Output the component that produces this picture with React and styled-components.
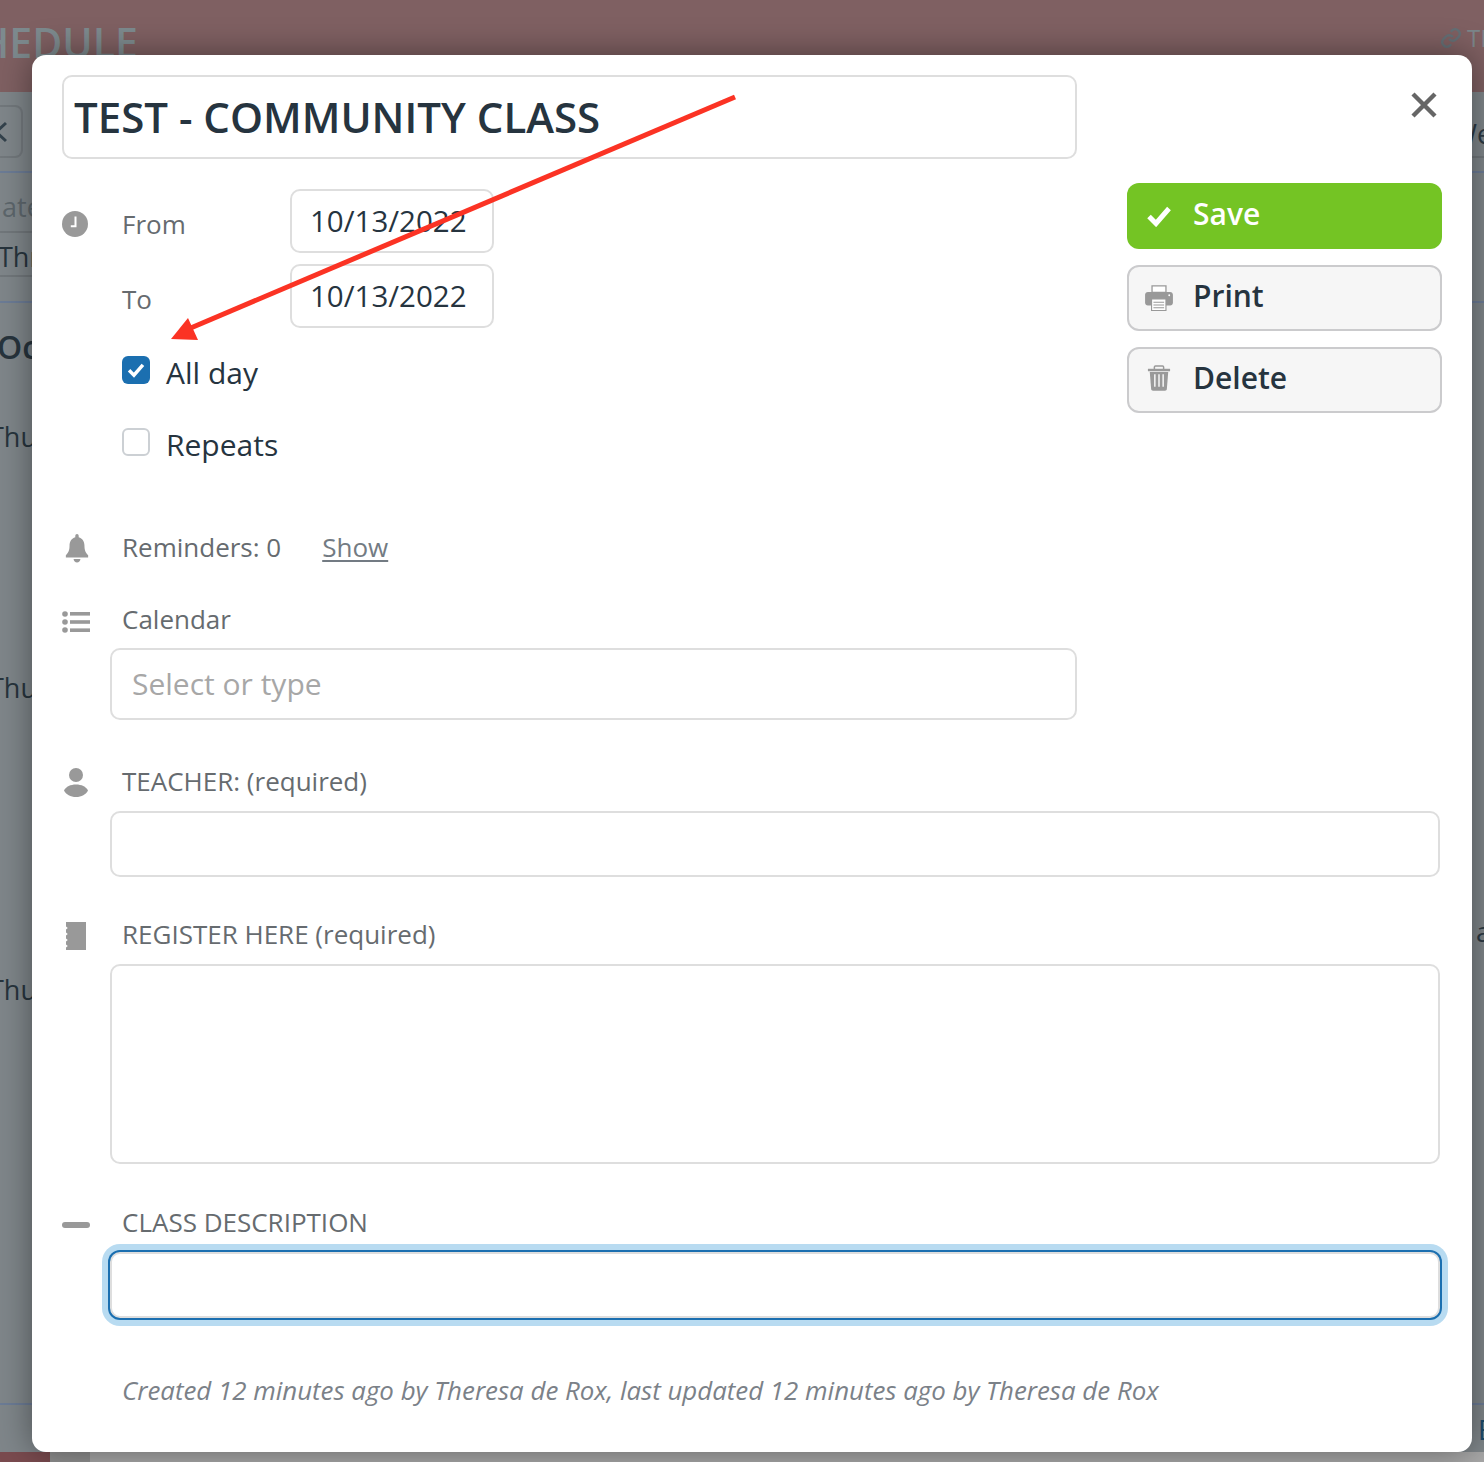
import React from "react";
import styled, { createGlobalStyle } from "styled-components";

const Global = createGlobalStyle`
  html, body { margin: 0; padding: 0; background: #7f8589; }
  * { box-sizing: border-box; }
  body { font-family: "Open Sans", "Liberation Sans", sans-serif; }
`;

const Page = styled.div`
  position: relative;
  width: 1484px;
  height: 1462px;
  overflow: hidden;
  display: flex;
  flex-direction: column;
`;

/* ---- page behind the dialog ---- */
const Header = styled.div`
  height: 92px;
  flex: none;
  background: #7f6062;
  display: flex;
  justify-content: space-between;
  align-items: flex-start;
  overflow: hidden;
`;
const HeaderTitle = styled.div`
  margin: 14px 0 0 -70px;
  font-size: 41px;
  line-height: 56px;
  font-weight: 600;
  color: #7d8a8e;
  white-space: nowrap;
`;
const HeaderLink = styled.div`
  margin-top: 22px;
  width: 44px;
  display: flex;
  align-items: center;
  gap: 5px;
  color: #7b868a;
  font-size: 24px;
  line-height: 32px;
  overflow: hidden;
  flex: none;
`;
const Body = styled.div`
  flex: 1;
  display: flex;
  justify-content: space-between;
  background: #7f868a;
`;
const BackColumn = styled.div`
  width: ${(p) => p.$w}px;
  overflow: hidden;
  display: flex;
  flex-direction: column;
`;
const BackRow = styled.div`
  height: ${(p) => p.$h}px;
  flex: none;
  padding-left: ${(p) => p.$x || 0}px;
  padding-top: ${(p) => p.$pad || 0}px;
  border-bottom: ${(p) => (p.$line ? `2px solid ${p.$line}` : "none")};
  white-space: nowrap;
  font-size: ${(p) => p.$size || 27}px;
  line-height: 36px;
  font-weight: ${(p) => p.$weight || 400};
  color: ${(p) => p.$color || "#27343d"};
`;
const BackText = styled.span`
  display: inline-block;
  margin-left: ${(p) => p.$shift || 0}px;
`;
const BackButton = styled.div`
  width: 23px;
  height: 53px;
  margin-top: 13px;
  border: 2px solid #72787c;
  border-left: none;
  border-radius: 0 8px 8px 0;
  display: flex;
  align-items: center;
`;
const Strip = styled.div`
  height: 10px;
  flex: none;
  display: flex;
  background: #a8a8a8;
`;
const StripPart = styled.div`
  width: ${(p) => p.$w}px;
  background: ${(p) => p.$c};
`;

/* ---- dialog ---- */
const Modal = styled.div`
  position: absolute;
  left: 32px;
  top: 55px;
  width: 1440px;
  height: 1397px;
  background: #fff;
  border-radius: 14px;
  padding: 20px 30px 0;
  box-shadow: 0 0 34px rgba(0, 0, 0, 0.42);
  color: #26343f;
`;
const Top = styled.div`
  display: flex;
  gap: 50px;
`;
const Left = styled.div`
  width: 1015px;
  flex: none;
`;
const Side = styled.div`
  width: 315px;
  flex: none;
  display: flex;
  flex-direction: column;
`;
const CloseRow = styled.div`
  height: 108px;
  display: flex;
  justify-content: flex-end;
  padding: 17px 5px 0 0;
`;
const Input = styled.input`
  display: block;
  font-family: inherit;
  border: 2px solid #dedede;
  border-radius: 10px;
  background: #fff;
  outline: none;
  color: #26343f;
  &::placeholder { color: #a7a7a7; opacity: 1; }
`;
const TitleInput = styled(Input)`
  width: 100%;
  height: 84px;
  padding: 0 10px 2px;
  font-size: 42px;
  font-weight: 600;
`;
const DateRow = styled.div`
  display: flex;
  align-items: center;
  height: 64px;
  margin-top: ${(p) => p.$top}px;
`;
const IconCell = styled.div`
  width: 60px;
  flex: none;
  display: flex;
  align-items: center;
  justify-content: flex-start;
  padding-top: ${(p) => p.$y || 0}px;
  padding-left: ${(p) => p.$x || 0}px;
  svg { display: block; }
`;
const Label = styled.div`
  font-size: 26px;
  line-height: 40px;
  padding-bottom: 2px;
  color: #666b6f;
  white-space: nowrap;
`;
const DateLabel = styled(Label)`
  width: 168px;
  flex: none;
  padding-top: 8px;
  padding-bottom: 2px;
`;
const DateInput = styled(Input)`
  width: 204px;
  height: 64px;
  padding: 0 0 2px 18px;
  font-size: 29.5px;
`;
const CheckRow = styled.label`
  display: flex;
  align-items: flex-start;
  gap: 16px;
  height: 28px;
  margin: ${(p) => p.$top}px 0 0 60px;
  font-size: 30px;
  line-height: 34px;
  color: #26343f;
`;
const CheckBox = styled.span`
  width: 28px;
  height: 28px;
  flex: none;
  border-radius: 6px;
  background: ${(p) => (p.$on ? "#1b6fb0" : "#fff")};
  border: ${(p) => (p.$on ? "none" : "2px solid #ccd0d4")};
  display: flex;
  align-items: center;
  justify-content: center;
`;
const ButtonBase = styled.button`
  display: flex;
  align-items: center;
  width: 315px;
  height: 66px;
  padding: 0 0 0 17px;
  margin-bottom: 16px;
  border-radius: 12px;
  font-family: inherit;
  font-size: 30px;
  font-weight: 600;
  text-align: left;
`;
const SaveButton = styled(ButtonBase)`
  background: #74c424;
  border: none;
  color: #fff;
`;
const PlainButton = styled(ButtonBase)`
  background: #f6f6f6;
  border: 2px solid #cbcbcd;
  color: #26343f;
  padding-left: 15px;
`;
const ButtonIcon = styled.span`
  width: 49px;
  flex: none;
  display: flex;
  padding-left: ${(p) => p.$x || 0}px;
  padding-bottom: ${(p) => p.$b || 0}px;
  svg { display: block; }
`;
const ButtonText = styled.span`
  padding-bottom: 6px;
`;
const FieldHead = styled.div`
  display: flex;
  align-items: center;
  height: 40px;
  margin-top: ${(p) => p.$top}px;
`;
const ShowLink = styled.a`
  margin-left: 41px;
  padding-bottom: 2px;
  font-size: 26px;
  line-height: 40px;
  color: #737b83;
  text-decoration: underline;
  text-underline-offset: 3px;
`;
const FieldInput = styled(Input)`
  margin: ${(p) => p.$top}px 0 0 48px;
  width: ${(p) => p.$w}px;
  height: ${(p) => p.$h}px;
  padding: 0 20px 2px;
  font-size: 30px;
`;
const FieldArea = styled.textarea`
  display: block;
  margin: 9px 0 0 48px;
  width: 1330px;
  height: 200px;
  border: 2px solid #dedede;
  border-radius: 10px;
  outline: none;
  resize: none;
  background: #fff;
`;
const FocusInput = styled(FieldInput)`
  box-shadow: 0 0 0 2px #1b6fb0, 0 0 0 8px #b8dbf1;
`;
const Meta = styled.div`
  margin: 52px 0 0 60px;
  font-size: 25.87px;
  line-height: 40px;
  font-style: italic;
  color: #7b8188;
  white-space: nowrap;
`;
const Annotation = styled.svg`
  position: absolute;
  left: 0;
  top: 0;
  pointer-events: none;
`;

const G = "#999";

const Clock = () => (
  <svg width="26" height="26" viewBox="0 0 26 26">
    <circle cx="13" cy="13" r="13" fill={G} />
    <path d="M13.5 5.5V15.2H8.8" fill="none" stroke="#fff" strokeWidth="2" />
  </svg>
);
const Bell = () => (
  <svg width="24" height="29" viewBox="0 0 28 30" preserveAspectRatio="none">
    <path fill={G} d="M14 0c1.2 0 2 .9 2 2v1.3c4.300 1 6.700 4.500 6.700 8.700 0 5 1.300 7.300 4.300 10v2.400H1V22c3-2.700 4.300-5 4.300-10 0-4.200 2.400-7.700 6.700-8.700V2c0-1.100.8-2 2-2z" />
    <path fill={G} d="M10 25.800h8c-.2 2.200-1.900 3.700-4 3.700s-3.800-1.500-4-3.700z" />
  </svg>
);
const ListIcon = () => (
  <svg width="28" height="22" viewBox="0 0 28 22">
    <circle cx="3" cy="3" r="2.800" fill={G} />
    <circle cx="3" cy="11" r="2.800" fill={G} />
    <circle cx="3" cy="19" r="2.800" fill={G} />
    <rect x="8" y="1" width="20" height="3.600" fill={G} />
    <rect x="8" y="9.200" width="20" height="3.600" fill={G} />
    <rect x="8" y="17.400" width="20" height="3.600" fill={G} />
  </svg>
);
const Person = () => (
  <svg width="26" height="30" viewBox="0 0 26 30">
    <circle cx="14" cy="7" r="7" fill={G} />
    <path fill={G} d="M2 22.500C4 18.500 8.500 16.500 14 16.500s10 2 12 6c-2 4-6.500 6.500-12 6.500S4 26.500 2 22.500z" />
  </svg>
);
const Notebook = () => (
  <svg width="26" height="30" viewBox="0 0 26 30">
    <path fill={G} d="M4 1h20v28H4v-2.500l1.800-1.500L4 23.500v-3l1.800-1.500L4 17.500v-3l1.800-1.500L4 11.500v-3L5.800 7 4 5.500z" />
  </svg>
);
const Minus = () => (
  <svg width="28" height="8" viewBox="0 0 28 8">
    <rect x="0" y="1" width="28" height="6" rx="3" fill={G} />
  </svg>
);
const Check = ({ w, h, sw, color }) => (
  <svg width={w} height={h} viewBox="0 0 26 22">
    <path d="M3 11.500l7 7L23 3.500" fill="none" stroke={color} strokeWidth={sw} strokeLinecap="butt" />
  </svg>
);
const Printer = () => (
  <svg width="28" height="26" viewBox="0 0 30 28">
    <path fill="#fff" stroke={G} strokeWidth="1.400" d="M7.500 1h15v7h-15z" />
    <path fill={G} d="M3 7.500h24c1.700 0 3 1.300 3 3V19c0 1.700-1.300 3-3 3H3c-1.700 0-3-1.300-3-3v-8.500c0-1.700 1.300-3 3-3z" />
    <circle cx="26" cy="11" r="1" fill="#fff" />
    <path fill="#fff" stroke={G} strokeWidth="1.200" d="M7 15h15.500v12.400H7z" />
    <path stroke={G} strokeWidth="1.100" d="M9 18.500h11.500M9 21.500h11.500M9 24.500h11.500" />
  </svg>
);
const Trash = () => (
  <svg width="24" height="26" viewBox="0 0 26 28">
    <path fill="none" stroke={G} strokeWidth="1.600" d="M8 4.500V2.200c0-.7.500-1.200 1.200-1.200h7.600c.7 0 1.200.5 1.200 1.200v2.300" />
    <path fill={G} d="M1 4h24v2.700H1z" />
    <path fill={G} d="M3 7.500h20l-1.500 18.500c-.1 1.100-.9 1.800-2 1.800h-13c-1.100 0-1.900-.7-2-1.800z" />
    <path stroke="#f6f6f6" strokeWidth="1.600" d="M8.500 10v13.500M13 10v13.500M17.500 10v13.500" />
  </svg>
);
const Close = () => (
  <svg width="26" height="26" viewBox="0 0 26 26">
    <path d="M2 2l22 22M24 2L2 24" stroke="#666" strokeWidth="4.400" />
  </svg>
);
const LinkIcon = () => (
  <svg width="22" height="22" viewBox="0 0 24 24" fill="none" stroke="#646f75" strokeWidth="2.600" style={{ flex: "none" }}>
    <path d="M10 13a5 5 0 0 0 7.500.5l3-3a5 5 0 0 0-7-7l-1.700 1.700" />
    <path d="M14 11a5 5 0 0 0-7.500-.5l-3 3a5 5 0 0 0 7 7l1.700-1.700" />
  </svg>
);

export default function App() {
  return (
    <Page>
      <Global />
      <Header>
        <HeaderTitle>SCHEDULE</HeaderTitle>
        <HeaderLink>
          <LinkIcon />
          <span>TE</span>
        </HeaderLink>
      </Header>
      <Body>
        <BackColumn $w={32}>
          <BackRow $h={81} $line="#6c7c96">
            <BackButton>
              <svg width="10" height="24" viewBox="0 0 10 24">
                <path d="M6 3L-4 12 6 21" fill="none" stroke="#33424c" strokeWidth="3" />
              </svg>
            </BackButton>
          </BackRow>
          <BackRow $h={60} $line="#71777b" $pad={16} $color="#5d666c"><BackText $shift={2}>ate</BackText></BackRow>
          <BackRow $h={44} $line="#71777b" $pad={6}><BackText $shift={-2}>Thr</BackText></BackRow>
          <BackRow $h={26} $line="#6c7c96" />
          <BackRow $h={116} $pad={26} $size={32} $weight={600}><BackText $shift={-3}>Oct</BackText></BackRow>
          <BackRow $h={251}><BackText $shift={-11}>Thu</BackText></BackRow>
          <BackRow $h={302}><BackText $shift={-11}>Thu</BackText></BackRow>
          <BackRow $h={433} $line="#6c7c96"><BackText $shift={-11}>Thu</BackText></BackRow>
        </BackColumn>
        <BackColumn $w={12}>
          <BackRow $h={66} $line="#71777b" $pad={24} $color="#2c3a44"><BackText $shift={-20}>We</BackText></BackRow>
          <BackRow $h={15} $line="#6c7c96" />
          <BackRow $h={130} $line="#6c7c96" />
          <BackRow $h={611} />
          <BackRow $h={36} $color="#2c3a44"><BackText $shift={4}>a</BackText></BackRow>
          <BackRow $h={455} $line="#6c7c96" />
          <BackRow $h={47} $pad={7} $color="#1b4a6b"><BackText $shift={6}>E</BackText></BackRow>
        </BackColumn>
      </Body>
      <Strip>
        <StripPart $w={50} $c="#7a4b4f" />
        <StripPart $w={40} $c="#909090" />
      </Strip>

      <Modal>
        <Top>
          <Left>
            <TitleInput readOnly value="TEST - COMMUNITY CLASS" />
            <DateRow $top={30}>
              <IconCell $y={6}><Clock /></IconCell>
              <DateLabel>From</DateLabel>
              <DateInput readOnly value="10/13/2022" />
            </DateRow>
            <DateRow $top={11}>
              <IconCell />
              <DateLabel>To</DateLabel>
              <DateInput readOnly value="10/13/2022" />
            </DateRow>
            <CheckRow $top={28}>
              <CheckBox $on><Check w={18} h={16} sw={5} color="#fff" /></CheckBox>
              <span>All day</span>
            </CheckRow>
            <CheckRow $top={44}>
              <CheckBox />
              <span>Repeats</span>
            </CheckRow>
          </Left>
          <Side>
            <CloseRow><Close /></CloseRow>
            <SaveButton>
              <ButtonIcon $x={2}><Check w={26} h={22} sw={5} color="#fff" /></ButtonIcon>
              <ButtonText>Save</ButtonText>
            </SaveButton>
            <PlainButton>
              <ButtonIcon $x={1}><Printer /></ButtonIcon>
              <ButtonText>Print</ButtonText>
            </PlainButton>
            <PlainButton>
              <ButtonIcon $x={3} $b={4}><Trash /></ButtonIcon>
              <ButtonText>Delete</ButtonText>
            </PlainButton>
          </Side>
        </Top>

        <FieldHead $top={72}>
          <IconCell $x={3}><Bell /></IconCell>
          <Label>Reminders: 0</Label>
          <ShowLink>Show</ShowLink>
        </FieldHead>
        <FieldHead $top={32}>
          <IconCell $y={3}><ListIcon /></IconCell>
          <Label>Calendar</Label>
        </FieldHead>
        <FieldInput $top={8} $w={967} $h={72} placeholder="Select or type" readOnly />
        <FieldHead $top={42}>
          <IconCell $y={2}><Person /></IconCell>
          <Label>TEACHER: (required)</Label>
        </FieldHead>
        <FieldInput $top={9} $w={1330} $h={66} readOnly />
        <FieldHead $top={38}>
          <IconCell $y={2}><Notebook /></IconCell>
          <Label>REGISTER HERE (required)</Label>
        </FieldHead>
        <FieldArea readOnly />
        <FieldHead $top={39}>
          <IconCell $y={4}><Minus /></IconCell>
          <Label>CLASS DESCRIPTION</Label>
        </FieldHead>
        <FocusInput $top={9} $w={1330} $h={66} readOnly />
        <Meta>Created 12 minutes ago by Theresa de Rox, last updated 12 minutes ago by Theresa de Rox</Meta>
      </Modal>

      <Annotation width="1484" height="1462" viewBox="0 0 1484 1462">
        <path d="M735 97L186 330" stroke="#fb3324" strokeWidth="5" fill="none" />
        <path d="M171 339L188 318L198 340Z" fill="#fb3324" />
      </Annotation>
    </Page>
  );
}
